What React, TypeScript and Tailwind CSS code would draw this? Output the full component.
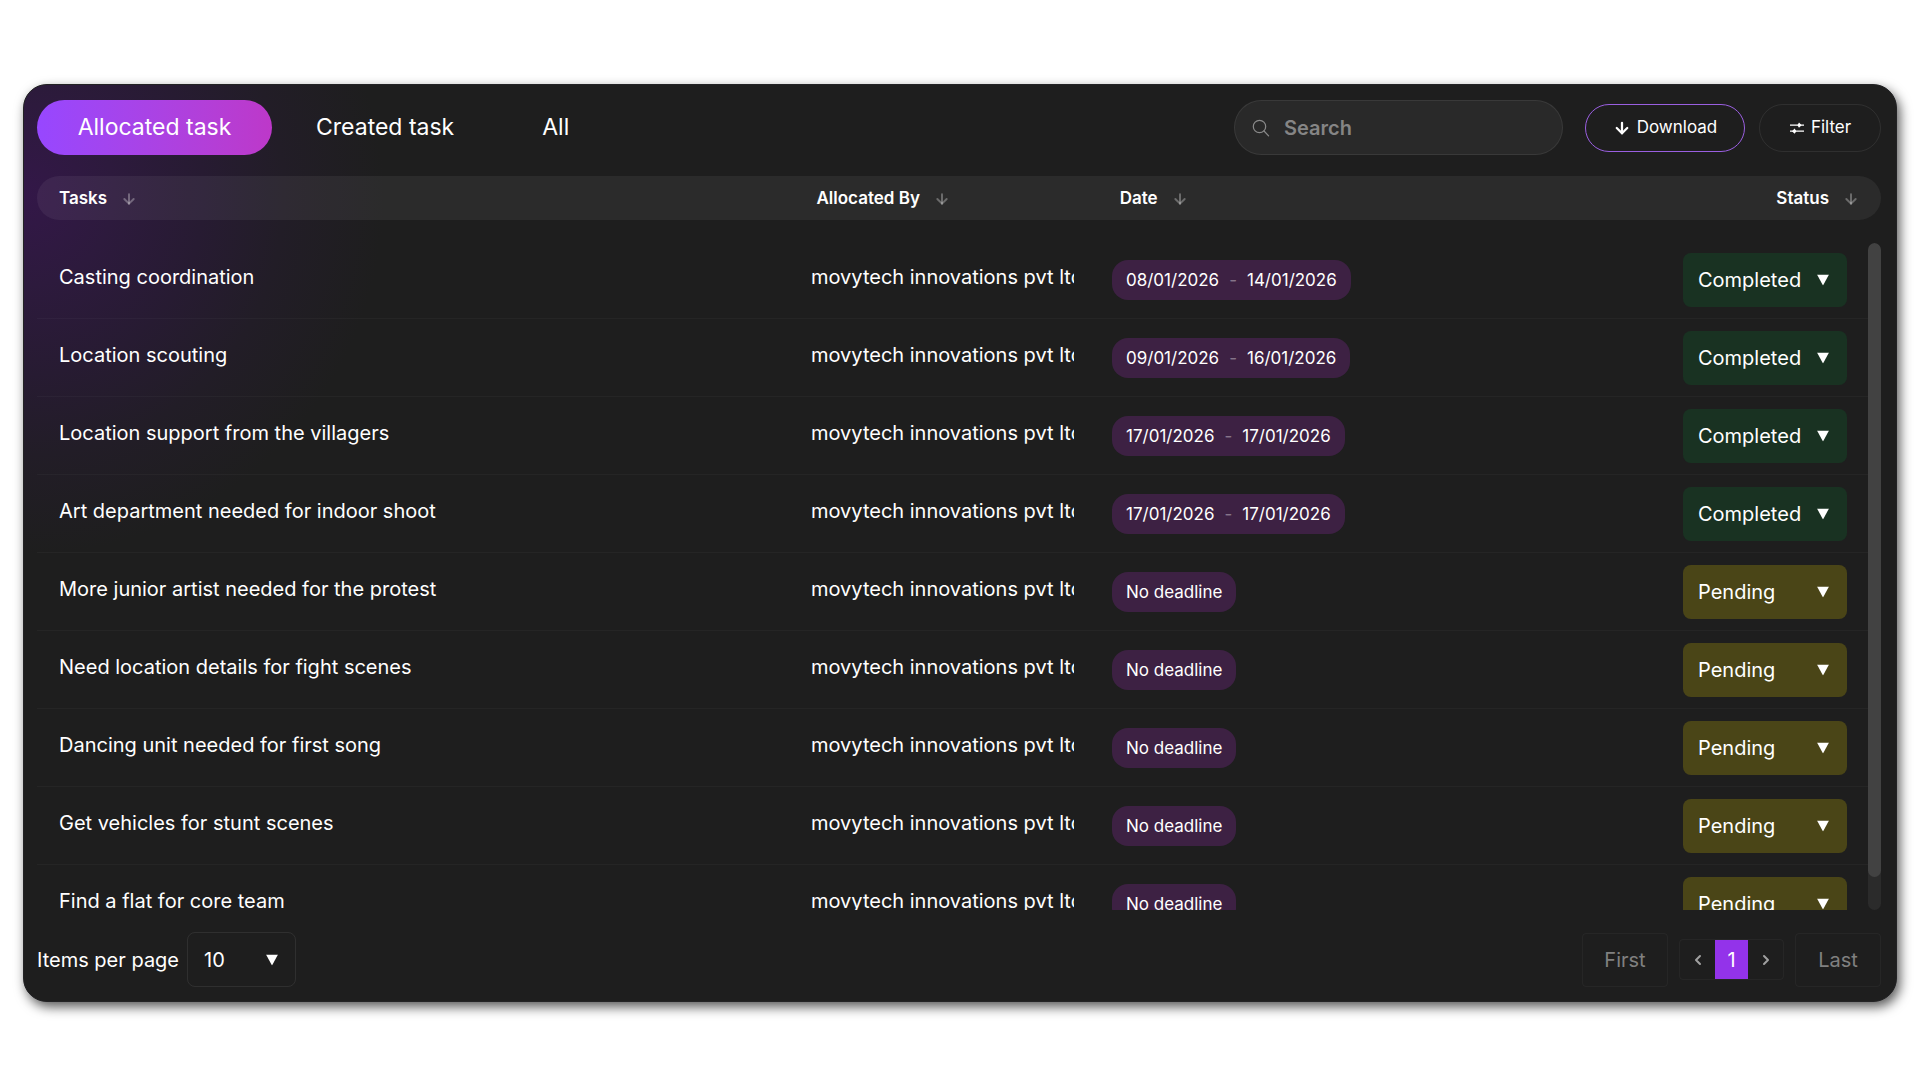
import { useState } from 'react';
import { ArrowDown, ChevronLeft, ChevronRight } from 'lucide-react';

type Status = 'Completed' | 'Pending';

interface Task {
  id: number;
  title: string;
  allocatedBy: string;
  start?: string;
  end?: string;
  status: Status;
}

const OWNER = 'movytech innovations pvt ltd';

const INITIAL_TASKS: Task[] = [
  { id: 1, title: 'Casting coordination', allocatedBy: OWNER, start: '08/01/2026', end: '14/01/2026', status: 'Completed' },
  { id: 2, title: 'Location scouting', allocatedBy: OWNER, start: '09/01/2026', end: '16/01/2026', status: 'Completed' },
  { id: 3, title: 'Location support from the villagers', allocatedBy: OWNER, start: '17/01/2026', end: '17/01/2026', status: 'Completed' },
  { id: 4, title: 'Art department needed for indoor shoot', allocatedBy: OWNER, start: '17/01/2026', end: '17/01/2026', status: 'Completed' },
  { id: 5, title: 'More junior artist needed for the protest', allocatedBy: OWNER, status: 'Pending' },
  { id: 6, title: 'Need location details for fight scenes', allocatedBy: OWNER, status: 'Pending' },
  { id: 7, title: 'Dancing unit needed for first song', allocatedBy: OWNER, status: 'Pending' },
  { id: 8, title: 'Get vehicles for stunt scenes', allocatedBy: OWNER, status: 'Pending' },
  { id: 9, title: 'Find a flat for core team', allocatedBy: OWNER, status: 'Pending' },
];

const TABS = ['Allocated task', 'Created task', 'All'];
const COLUMNS = ['Tasks', 'Allocated By', 'Date', 'Status'];

// Header and body rows share the same column template
const ROW_GRID = 'grid grid-cols-[774fr_301fr_571fr_185fr] items-center';

function Caret() {
  return (
    <svg viewBox="0 0 12 11" className="pointer-events-none absolute right-[18px] top-1/2 h-[11px] w-3 -translate-y-1/2" fill="currentColor" aria-hidden="true">
      <path d="M0 0h12L6 11z" />
    </svg>
  );
}

function SearchIcon() {
  return (
    <svg viewBox="0 0 18 18" className="size-[18px] shrink-0 text-[#8a8a8a]" fill="none" stroke="currentColor" strokeWidth="1.2" strokeLinecap="round" aria-hidden="true">
      <circle cx="7.5" cy="7.5" r="6.2" />
      <path d="M12 12l4.6 4.8" />
    </svg>
  );
}

function FilterIcon() {
  return (
    <svg viewBox="0 0 16 14" className="h-[14px] w-4" aria-hidden="true">
      <path d="M1 4.2h14M1 10.2h14" fill="none" stroke="currentColor" strokeWidth="1.2" />
      <path d="M10 1.6l2.6 2.6-2.6 2.6-1.6-2.6zM5.6 7.6l1.8 2.6-1.8 2.6L3 10.2z" fill="currentColor" />
    </svg>
  );
}

export default function App() {
  const [tab, setTab] = useState(TABS[0]);
  const [tasks, setTasks] = useState(INITIAL_TASKS);
  const [query, setQuery] = useState('');
  const [scroll, setScroll] = useState(0);

  const visible = tasks.filter(t => t.title.toLowerCase().includes(query.toLowerCase()));

  const changeStatus = (id: number, status: Status) => {
    setTasks(prev => prev.map(t => (t.id === id ? { ...t, status } : t)));
  };

  return (
    <div className="min-h-screen bg-white px-[23px] py-[84px] font-['Inter',sans-serif] text-white">
      <main className="rounded-3xl border border-[#232325] bg-[#1e1e1e] bg-[radial-gradient(circle_at_0px_110px,#331748_0px,#2d1a3d_90px,#271b32_180px,#221d27_260px,#1e1e1e_360px)] pt-[15px] pr-[15px] pb-[14px] pl-[13px] shadow-[3px_5px_12px_rgba(0,0,0,0.65)]">
        {/* Toolbar */}
        <div className="flex items-center justify-between">
          <div className="flex" role="tablist">
            {TABS.map(name => (
              <button
                key={name}
                role="tab"
                aria-selected={tab === name}
                onClick={() => setTab(name)}
                className={`h-[55px] rounded-full text-[23px] ${
                  tab === name ? 'w-[235px] bg-linear-to-r from-[#9747ff] to-[#bd38c9]' : 'px-11'
                }`}
              >
                {name}
              </button>
            ))}
          </div>

          <div className="flex items-center">
            <label className="mr-[22px] flex h-[55px] w-[329px] items-center gap-3.5 rounded-full border border-white/8 bg-[#292929] px-[17px]">
              <SearchIcon />
              <input
                value={query}
                onChange={e => setQuery(e.target.value)}
                placeholder="Search"
                aria-label="Search"
                className="w-full bg-transparent text-xl font-semibold outline-none placeholder:text-[#858585]"
              />
            </label>
            <button className="mr-[14px] flex h-12 w-40 items-center justify-center gap-1.5 rounded-full border border-[#9a5fe0] text-[17px]">
              <ArrowDown size={18} strokeWidth={3} />
              Download
            </button>
            <button className="flex h-12 w-[122px] items-center justify-center gap-1.5 rounded-full border border-white/8 text-[17px]">
              <FilterIcon />
              Filter
            </button>
          </div>
        </div>

        <div className="relative mt-[21px]">
          <table className="block">
            <thead className="block h-11 rounded-full bg-white/6">
              <tr className={`${ROW_GRID} h-11`}>
                {COLUMNS.map(name => (
                  <th key={name} className="pt-0.5 text-left text-[17px] font-semibold first:pl-[22px] last:pr-[22px] last:text-right">
                    <button className="inline-flex items-center gap-3.5">
                      {name}
                      <ArrowDown size={16} strokeWidth={3} className="text-white/30" />
                    </button>
                  </th>
                ))}
              </tr>
            </thead>
            <tbody
              onScroll={e => setScroll(e.currentTarget.scrollTop / e.currentTarget.scrollHeight)}
              className="mt-[21px] block h-[669px] overflow-y-auto pr-[13px] [scrollbar-width:none]"
            >
              {visible.map(task => (
                <tr key={task.id} className={`${ROW_GRID} h-[78px] border-b border-white/3`}>
                  <td className="pb-1.5 pl-[22px] text-xl">{task.title}</td>
                  <td className="mr-[38px] overflow-hidden pb-1.5 text-xl whitespace-nowrap">{task.allocatedBy}</td>
                  <td>
                    <span className="inline-flex h-10 items-center gap-2.5 rounded-2xl bg-[#3d2143] px-[14px] pt-0.5 text-[17px]">
                      {task.start ? (
                        <>
                          {task.start}
                          <span className="text-white/40">-</span>
                          {task.end}
                        </>
                      ) : (
                        'No deadline'
                      )}
                    </span>
                  </td>
                  <td>
                    <div className="relative w-[164px]">
                      <select
                        value={task.status}
                        onChange={e => changeStatus(task.id, e.target.value as Status)}
                        aria-label={`Status of ${task.title}`}
                        className={`h-[54px] w-full appearance-none rounded-lg px-[15px] text-xl ${
                          task.status === 'Completed' ? 'bg-[#193222]' : 'bg-[#4a4517]'
                        }`}
                      >
                        <option>Completed</option>
                        <option>Pending</option>
                      </select>
                      <Caret />
                    </div>
                  </td>
                </tr>
              ))}
            </tbody>
          </table>

          {/* Scrollbar track and thumb */}
          <div className="pointer-events-none absolute right-0 bottom-0 h-[667px] w-[13px] overflow-hidden rounded-full bg-[#2b2b2b]">
            <div className="relative h-[95%] rounded-full bg-[#424242]" style={{ top: `${scroll * 100}%` }} />
          </div>
        </div>

        {/* Pagination */}
        <div className="mt-[22px] flex items-center justify-between text-xl">
          <div className="flex items-center gap-2">
            <label htmlFor="per-page">Items per page</label>
            <div className="relative">
              <select id="per-page" className="h-[55px] w-[109px] appearance-none rounded-lg border border-white/8 px-4">
                <option>10</option>
                <option>25</option>
                <option>50</option>
              </select>
              <Caret />
            </div>
          </div>

          <nav className="flex items-center gap-[11px]" aria-label="Pagination">
            <button className="h-[54px] w-[86px] rounded-sm border border-white/4 text-[#808080]">First</button>
            <div className="flex h-[41px] items-stretch rounded-sm border border-white/4">
              <button className="flex w-[35px] items-center justify-center text-[#a0a0a0]" aria-label="Previous page">
                <ChevronLeft size={16} strokeWidth={3} />
              </button>
              <button className="w-[33px] bg-[#9333ea]">1</button>
              <button className="flex w-[35px] items-center justify-center text-[#a0a0a0]" aria-label="Next page">
                <ChevronRight size={16} strokeWidth={3} />
              </button>
            </div>
            <button className="h-[54px] w-[86px] rounded-sm border border-white/4 text-[#808080]">Last</button>
          </nav>
        </div>
      </main>
    </div>
  );
}
